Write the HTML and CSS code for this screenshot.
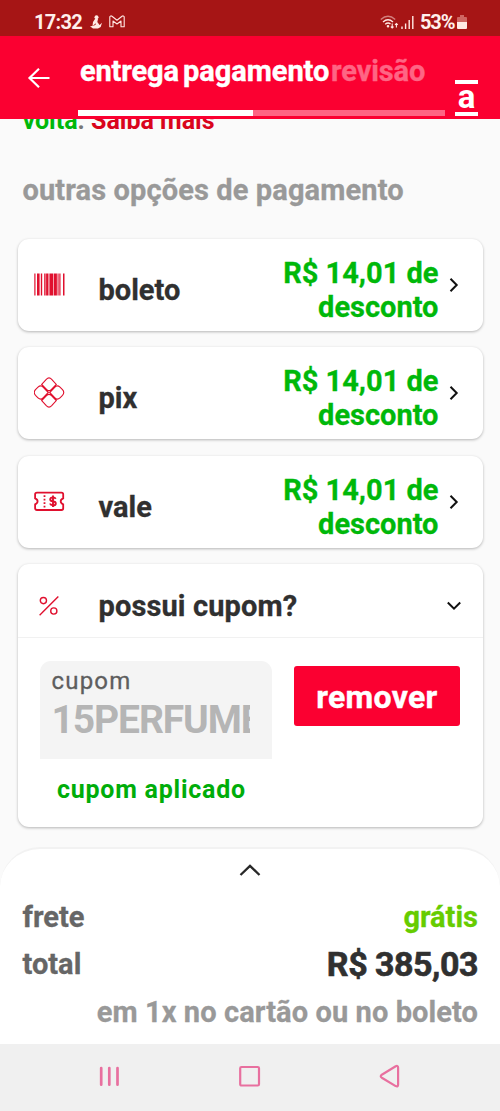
FILE: index.html
```html
<!DOCTYPE html>
<html lang="pt-BR">
<head>
<meta charset="utf-8">
<title>pagamento</title>
<link rel="stylesheet" href="styles.css">
</head>
<body>
<div class="screen">
  <div class="status">
    <span class="clock">17:32</span>
    <svg class="st-user" width="12" height="14" viewBox="0 0 12 14" fill="#ffe9e4"><circle cx="6.5" cy="2.3" r="2"/><path d="M5 4 8 4 7.3 7 9.6 10 12 7.8 10.7 12 8 13.5H3L0 11.2 2.5 11 3 7Z"/><path d="M3.5 10.5 6 8.8" stroke="#a61515" stroke-width=".9"/></svg>
    <svg class="st-mail" width="16" height="13" viewBox="0 0 16 13" fill="none" stroke="#ffe9e4" stroke-width="1.1" stroke-linejoin="round"><path d="M.8 11.8V1.8Q1.5.4 3 1.2L8 5.2 13 1.2Q14.5.4 15.2 1.8V11.8H12V6L8 9 4 6V11.8Z"/></svg>
    <svg class="st-wifi" width="19" height="15" viewBox="0 0 19 15" fill="none" stroke="#ffe9e4" stroke-width="1.4"><path d="M.8 4.5Q8 -2 15.2 4.5" opacity=".5"/><path d="M3 7Q8 2.5 13 7M5.2 9.3Q8 7 10.5 9"/><circle cx="8" cy="11.3" r=".6"/><path d="M12.2 8.5V13M10.8 11.6 12.2 13 13.6 11.6M16.4 12.5V8.5M15 9.9 16.4 8.5 17.8 9.9" stroke-width="1.1"/></svg>
    <svg class="st-signal" width="13" height="13" viewBox="0 0 13 13" stroke="#ffe9e4" stroke-width="1.4"><path d="M1 13V10.5M4.6 13V7.5M8.2 13V4M11.8 13V0"/></svg>
    <span class="percent">53%</span>
    <svg class="st-battery" width="10" height="14" viewBox="0 0 10 14"><path d="M3 0H7V2H9Q10 2 10 3V7H0V3Q0 2 1 2H3Z" fill="#cf6662"/><path d="M0 7H10V13Q10 14 9 14H1Q0 14 0 13Z" fill="#ffe9e4"/></svg>
  </div>
  <header class="header">
    <svg class="back" width="24" height="22" viewBox="0 0 24 22" fill="none" stroke="#fff" stroke-width="2.2"><path d="M22.5 11H2M12 1.8 2.5 11 12 20.2"/></svg>
    <div class="steps">
      <div class="tabs"><span class="tab t1">entrega</span><span class="tab t2">pagamento</span><span class="tab t3">revisão</span></div>
      <div class="progress"><div class="progress-done"></div></div>
    </div>
    <div class="logo"><span>a</span></div>
  </header>
  <main class="content">
    <div class="cut"><p><span class="green">volta</span><span class="grey">.</span> <span class="red">Saiba mais</span></p></div>
    <h2 class="title">outras opções de pagamento</h2>
    <div class="cards">
      <div class="card option">
        <svg class="icon" width="32" height="32" viewBox="0 0 32 32" fill="#e0102e"><path d="M.3 4.5h1.2v22H.3zM3 4.5h2.6v22H3zM6.8 4.5h1.4v22H6.8zM10.2 4.5h1.4v22h-1.4zM12.1 4.5h2.4v22h-2.4zM15.4 4.5h4v22h-4zM20 4.5h2.9v22h-2.9zM23.5 4.5h1.1v22h-1.1zM25.3 4.5h1.2v22h-1.2zM29 4.5h1.5v22H29z"/></svg>
        <span class="name">boleto</span><span class="discount">R$ 14,01 de<br>desconto</span>
        <svg class="chev" width="10" height="16" viewBox="0 0 10 16"><path d="M1.5 1.8 7.7 8 1.5 14.2"/></svg>
      </div>
      <div class="card option">
        <svg class="icon" width="32" height="32" viewBox="0 0 32 32" fill="none" stroke="#e0102e" stroke-width="1.1"><path d="M7.7 7.4 12.3 2.3Q15 -.5 17.7 2.3L22.3 7.4 17.2 12.6Q15 14.8 12.8 12.6ZM7.7 23.6 12.3 28.7Q15 31.5 17.7 28.7L22.3 23.6 17.2 18.4Q15 16.2 12.8 18.4ZM14.3 15.5 9.3 10.3Q6.8 7.5 4 10.2L1.5 12.7Q-1 15.5 1.5 18.3L4 20.8Q6.8 23.5 9.3 20.7ZM15.7 15.5 20.7 10.3Q23.2 7.5 26 10.2L28.5 12.7Q31 15.5 28.5 18.3L26 20.8Q23.2 23.5 20.7 20.7Z"/></svg>
        <span class="name">pix</span><span class="discount">R$ 14,01 de<br>desconto</span>
        <svg class="chev" width="10" height="16" viewBox="0 0 10 16"><path d="M1.5 1.8 7.7 8 1.5 14.2"/></svg>
      </div>
      <div class="card option">
        <svg class="icon" width="32" height="32" viewBox="0 0 32 32" fill="none" stroke="#e0102e" stroke-width="1.8"><path d="M3 6.6H27.5Q29.2 6.6 29.2 8.3V12.3Q26.7 13.2 26.7 15.3T29.2 18.3V22.3Q29.2 24 27.5 24H3Q1.1 24 1.1 22.3V18.3Q3.6 17.4 3.6 15.3T1.1 12.3V8.3Q1.1 6.6 3 6.6Z"/><path d="M10.5 9.3V22.3" stroke-dasharray="1.7 1.8"/><path d="M21.7 12.8Q21 11.4 19 11.4 16.2 11.4 16.2 13.4 16.2 15 19 15.3 21.8 15.7 21.8 17.4 21.8 19.3 19 19.3 16.5 19.3 16 17.6M19 9.6V21.1" stroke-width="1.9"/></svg>
        <span class="name">vale</span><span class="discount">R$ 14,01 de<br>desconto</span>
        <svg class="chev" width="10" height="16" viewBox="0 0 10 16"><path d="M1.5 1.8 7.7 8 1.5 14.2"/></svg>
      </div>
      <div class="card coupon">
        <div class="coupon-head">
          <svg class="pct" width="20" height="20" viewBox="0 0 20 20" fill="none" stroke="#e0102e" stroke-width="1.4"><path d="M.6 19.3 19.3.6"/><circle cx="4.4" cy="4.6" r="3.1"/><circle cx="14.8" cy="15" r="3.1"/></svg>
          <span class="question">possui cupom?</span>
          <svg class="down" width="16" height="10" viewBox="0 0 16 10"><path d="M1.8 1.5 8 7.7 14.2 1.5"/></svg>
        </div>
        <div class="coupon-body">
          <div class="field"><span class="label">cupom</span><span class="code">15PERFUME</span></div>
          <div class="remove"><span>remover</span></div>
        </div>
        <div class="applied">cupom aplicado</div>
      </div>
    </div>
  </main>
  <section class="summary">
    <svg class="up" width="22" height="12" viewBox="0 0 22 12"><path d="M1.5 11 11 1.8 20.5 11"/></svg>
    <div class="row"><span class="k frete">frete</span><span class="free">grátis</span></div>
    <div class="row"><span class="k total">total</span><span class="price">R$ 385,03</span></div>
    <div class="row end"><span class="note">em 1x no cartão ou no boleto</span></div>
  </section>
  <nav class="nav">
    <svg width="22" height="26" viewBox="0 0 22 26"><path d="M2.2 5.1V21.7M10.3 5.1V21.7M18.5 5.1V21.7" stroke-width="2.7"/></svg>
    <svg width="22" height="26" viewBox="0 0 22 26"><rect x="1.2" y="4" width="18.8" height="18.5" rx="1.3"/></svg>
    <svg width="22" height="26" viewBox="0 0 22 26"><path d="M16.7 3.3 2.8 11.7Q.7 13.2 2.8 14.7L16.7 23.1Q19.1 24.2 19.1 21.7V4.7Q19.1 2.2 16.7 3.3Z" stroke-linejoin="round"/></svg>
  </nav>
</div>
</body>
</html>
```
FILE: styles.css
```css
* { box-sizing: border-box; }
body { margin: 0; font-family: Roboto, sans-serif; font-weight: 700; }
svg { display: block; flex: none; }
span { white-space: nowrap; }
.screen { width: 500px; height: 1111px; overflow: hidden; background: #fafafa; display: flex; flex-direction: column; }

.status { height: 36px; flex: none; background: #a61515; display: flex; align-items: flex-start; padding: 10px 33px 0 33px; color: #fff0ec; }
.clock { font-size: 20px; line-height: 25px; width: 48px; margin-left: 1px; letter-spacing: -.7px; }
.st-user { margin: 5px 0 0 8px; }
.st-mail { margin: 5px 0 0 7px; }
.st-wifi { margin: 5px 0 0 auto; }
.st-signal { margin: 6px 0 0 2px; }
.percent { font-size: 20px; line-height: 25px; width: 35px; margin-left: 6px; letter-spacing: -1.1px; }
.st-battery { margin: 5px 0 0 2px; }

.header { height: 83px; flex: none; background: #fb0031; display: flex; color: #fff; }
.back { margin: 31px 0 0 27px; }
.steps { width: 367px; margin-left: 27px; padding-top: 17px; }
.tabs { display: flex; height: 57px; padding-left: 2px; font-size: 29px; line-height: 36px; -webkit-text-stroke: .4px; }
.t1 { width: 103px; letter-spacing: -.15px; }
.t2 { width: 148px; letter-spacing: -.05px; }
.t3 { color: #fe6584; letter-spacing: -.1px; }
.progress { height: 6px; background: #fe6584; }
.progress-done { height: 6px; width: 175px; background: #fff; }
.logo { width: 23px; height: 36px; margin: 44px 0 0 10px; border-top: 4px solid #fff; border-bottom: 4px solid #fff; font-size: 33px; line-height: 28px; text-align: center; }
.logo span { display: block; margin-top: -1px; }

.content { height: 728px; flex: none; padding: 0 17px 0 17.5px; }
.cut { height: 14px; overflow: hidden; padding-left: 5px; }
.cut p { margin: -12px 0 0; font-size: 25px; line-height: 28px; }
.green { color: #00b80a; }
.grey { color: #777; }
.red { color: #d9041c; }
.title { margin: 39px 0 0 5px; font-size: 29px; line-height: 36px; letter-spacing: .12px; color: #999; -webkit-text-stroke: .3px; }
.cards { display: flex; flex-direction: column; gap: 16.3px; margin-top: 31px; }
.card { width: 465px; border-radius: 11px; background: #fff; box-shadow: 0 1px 3px rgba(0,0,0,.28); }
.option { height: 92px; display: flex; padding-left: 16.4px; font-size: 29px; line-height: 34px; -webkit-text-stroke: .3px; }
.icon { margin-top: 30px; }
.name { color: #303030; width: 130px; margin: 34px 0 0 32.6px; }
.discount { width: 210px; margin-top: 17px; text-align: right; color: #00b80a; }
.chev { margin: 38px 0 0 11px; }
.chev path, .down path { fill: none; stroke: #111; stroke-width: 2; }
.coupon { height: 263px; }
.coupon-head { height: 74px; display: flex; border-bottom: 1px solid #f1f1f1; padding-left: 21.4px; font-size: 29px; line-height: 34px; -webkit-text-stroke: .3px; }
.pct { margin-top: 32px; }
.question { color: #303030; width: 330px; margin: 25px 0 0 39.6px; letter-spacing: .12px; }
.down { margin: 37px 0 0 17.4px; }
.coupon-body { height: 122px; display: flex; padding: 23.5px 22px 0 22px; }
.field { width: 232.4px; height: 98px; background: #f4f4f4; border-radius: 11px 11px 0 0; padding: 5px 22px 0 12px; }
.label { display: block; font-size: 24px; line-height: 31px; font-weight: 400; letter-spacing: 1.2px; color: #5e5e5e; -webkit-text-stroke: .3px; }
.code { display: block; overflow: hidden; font-size: 39px; line-height: 46px; letter-spacing: -1.1px; color: #b5b5b5; }
.remove { width: 166px; height: 60px; margin: 5px 0 0 22px; background: #fb0031; border-radius: 3px; color: #fff; font-size: 32px; line-height: 63px; letter-spacing: .3px; text-align: center; -webkit-text-stroke: .4px; }
.applied { padding-left: 39.5px; font-size: 25px; line-height: 30px; margin-top: 15px; letter-spacing: .75px; color: #00ad0a; }

.summary { height: 197px; flex: none; background: #fff; border-radius: 40px 40px 0 0; border-top: 2px solid #f2f2f2; padding: 15px 22px 0 22.5px; display: flex; flex-direction: column; font-size: 29px; -webkit-text-stroke: .3px; }
.up { margin-left: 216.5px; }
.up path { fill: none; stroke: #282828; stroke-width: 2.3; }
.row { display: flex; justify-content: space-between; height: 47.5px; line-height: 36px; }
.up + .row { margin-top: 22.6px; }
.end { justify-content: flex-end; }
.k { color: #666; }
.free { color: #66cc00; }
.price { font-size: 34px; letter-spacing: -.5px; color: #303030; -webkit-text-stroke: .6px; }
.note { color: #999; letter-spacing: .09px; }
.nav { height: 67px; flex: none; background: #f0f0f0; display: flex; gap: 118px; padding: 19px 0 0 99px; }
.nav svg { fill: none; stroke: #e8709f; stroke-width: 2.2; stroke-linecap: round; }
```
